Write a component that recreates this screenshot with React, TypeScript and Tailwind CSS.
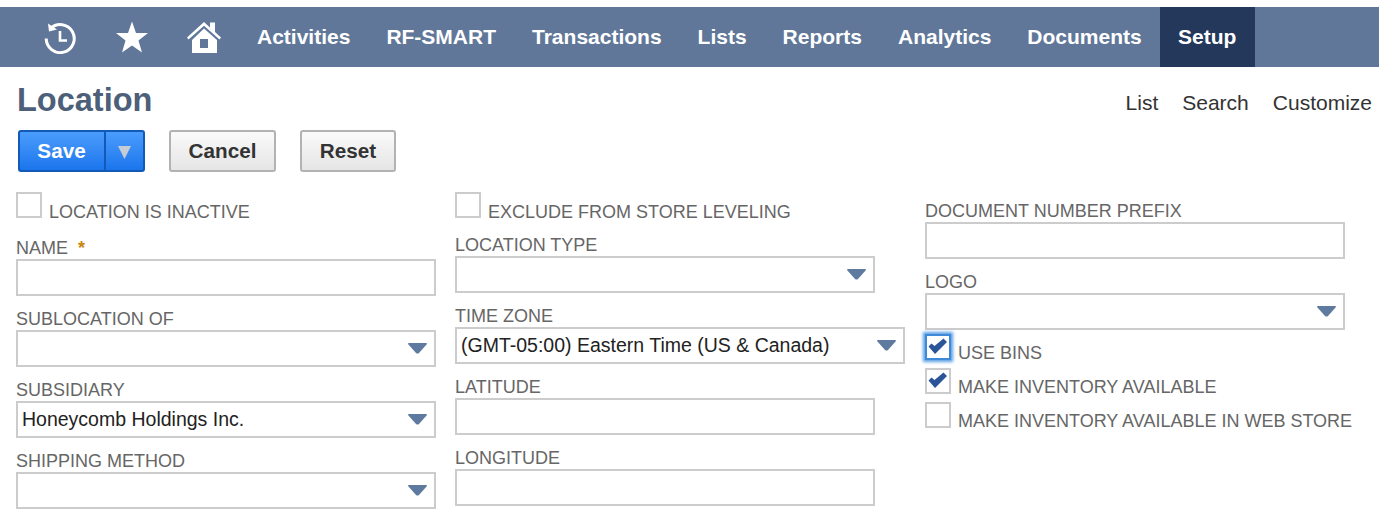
import type { ReactNode } from 'react';

const sans = 'font-["Liberation_Sans",Arial,sans-serif]';

const navItems = ['Activities', 'RF-SMART', 'Transactions', 'Lists', 'Reports', 'Analytics', 'Documents'];

function HistoryIcon() {
  return (
    <svg width="34" height="34" viewBox="0 0 34 34" fill="none" stroke="white" strokeWidth="3">
      <path d="M7.5 8.5 A14 14 0 1 1 3.2 18.5" />
      <path d="M5 3.5 L6 11.5 L14 9.5 Z" fill="white" stroke="none" />
      <path d="M17 11 V20.5 H24" strokeWidth="2.6" />
    </svg>
  );
}

function StarIcon() {
  return (
    <svg width="34" height="34" viewBox="0 0 34 34" fill="white">
      <path d="M17 1.5 L21 13 L33 13 L23.5 20.5 L27 32.5 L17 25.5 L7 32.5 L10.5 20.5 L1 13 L13 13 Z" />
    </svg>
  );
}

function HomeIcon() {
  return (
    <svg width="36" height="33" viewBox="0 0 36 33" fill="white">
      <path d="M1 16.5 L18 1 L24 6.500 V1.500 H29 V11 L35 16.5 L33.5 18.5 L18 4.8 L2.5 18.5 Z" />
      <path fillRule="evenodd" d="M18 7.5 L31 19 V32 H6 V19 Z M14 18 V27 H22 V18 Z" />
    </svg>
  );
}

function Caret() {
  return (
    <svg width="19" height="11" viewBox="0 0 19 11" className="absolute right-[7px] top-[11px]" fill="#5f7a9f">
      <path d="M0 1 Q0 0 1 0 H18 Q19 0 19 1 L11 10 Q9.500 11 8 10 Z" />
    </svg>
  );
}

function Check() {
  return (
    <svg width="20" height="18" viewBox="0 0 20 18" className="absolute left-[1px] top-[1px]" fill="#2a5699">
      <path d="M0.500 9.500 L3.500 6.500 L6.500 9 L15.500 1.500 L19 5 L7 17 Z" />
    </svg>
  );
}

function Label({ children }: { children: ReactNode }) {
  return <div className="h-[34px] pt-[12px] text-[18px] leading-[22px] whitespace-nowrap text-[#666666]">{children}</div>;
}

function TextField({ label }: { label: ReactNode }) {
  return (
    <div>
      <Label>{label}</Label>
      <div className="h-[37px] w-[420px] border-[2px] border-[#cccccc]" />
    </div>
  );
}

function SelectField({ label, value, wide }: { label: ReactNode; value?: string; wide?: boolean }) {
  return (
    <div>
      <Label>{label}</Label>
      <div className={`relative h-[37px] border-[2px] border-[#cccccc] pl-[4px] text-[19.500px] leading-[33px] text-[#222222] ${wide ? 'w-[450px]' : 'w-[420px]'}`}>
        {value}
        <Caret />
      </div>
    </div>
  );
}

function CheckField({ label, checked, focused, textTop = 'pt-[10px]' }: { label: string; checked?: boolean; focused?: boolean; textTop?: string }) {
  return (
    <div className="flex h-[34px] items-start gap-[7px]">
      <div
        className={`relative mt-[1px] h-[26px] w-[26px] shrink-0 border-[2px] ${focused ? 'border-[#3f8ad8] shadow-[0_0_3px_2px_#5b9fe6]' : 'border-[#cccccc]'}`}
      >
        {checked && <Check />}
      </div>
      <span className={`${textTop} text-[18px] leading-[22px] whitespace-nowrap text-[#666666]`}>{label}</span>
    </div>
  );
}

export default function App() {
  return (
    <div className={`h-[518px] w-[1379px] overflow-hidden bg-white pt-[7px] ${sans}`}>
      {/* Barra de navegación */}
      <nav className="flex h-[60px] items-center bg-[#607799] pl-[43px] text-[21px] font-bold text-white">
        <div className="flex items-center">
          <HistoryIcon />
          <div className="ml-[38px]"><StarIcon /></div>
          <div className="ml-[37px]"><HomeIcon /></div>
        </div>
        <div className="ml-[35px] flex h-full items-center gap-[36px]">
          {navItems.map(item => (
            <span key={item}>{item}</span>
          ))}
        </div>
        <div className="ml-[18px] flex h-full w-[95px] items-center justify-center bg-[#24385b]">Setup</div>
      </nav>

      {/* Título */}
      <div className="flex items-start justify-between pr-[7px] pl-[17px]">
        <h1 className="pt-[13px] text-[32.500px] leading-[40px] font-bold text-[#4d5f79]">Location</h1>
        <div className="flex gap-[24px] pt-[24px] text-[21px] leading-[24px] text-[#333333]">
          <span>List</span>
          <span>Search</span>
          <span>Customize</span>
        </div>
      </div>

      {/* Botones */}
      <div className="mt-[10px] flex pl-[18px] text-[20.700px] font-bold">
        <div className="flex h-[42px] w-[127px] rounded-[3px] border-[2px] border-[#125ab5] bg-gradient-to-b from-[#4a9cfc] to-[#1a75ec] text-white">
          <div className="flex w-[86px] items-center justify-center border-r-[2px] border-[#125ab5] pr-[1px]">Save</div>
          <div className="flex flex-1 items-center justify-center">
            <svg width="13" height="13" viewBox="0 0 13 13" className="mt-[3px]" fill="#c4ccd6">
              <path d="M0 0 H13 L6.500 13 Z" />
            </svg>
          </div>
        </div>
        <button className="ml-[24px] h-[42px] w-[107px] rounded-[3px] border-[2px] border-[#b2b2b2] bg-gradient-to-b from-[#fafafa] to-[#e5e5e5] text-[#333333]">Cancel</button>
        <button className="ml-[24px] h-[42px] w-[96px] rounded-[3px] border-[2px] border-[#b2b2b2] bg-gradient-to-b from-[#fafafa] to-[#e5e5e5] text-[#333333]">Reset</button>
      </div>

      {/* Formulario */}
      <div className="mt-[19px] flex pl-[16px]">
        <div className="w-[439px]">
          <CheckField label="LOCATION IS INACTIVE" />
          <TextField label={<>NAME <span className="ml-[5px] font-bold text-[#c8860a]">*</span></>} />
          <SelectField label="SUBLOCATION OF" />
          <SelectField label="SUBSIDIARY" value="Honeycomb Holdings Inc." />
          <SelectField label="SHIPPING METHOD" />
        </div>
        <div className="w-[470px]">
          <CheckField label="EXCLUDE FROM STORE LEVELING" />
          <div className="-mt-[3px]">
            <SelectField label="LOCATION TYPE" />
          </div>
          <SelectField label="TIME ZONE" value="(GMT-05:00) Eastern Time (US & Canada)" wide />
          <TextField label="LATITUDE" />
          <TextField label="LONGITUDE" />
        </div>
        <div className="-mt-[3px]">
          <TextField label="DOCUMENT NUMBER PREFIX" />
          <SelectField label="LOGO" />
          <div className="mt-[3px]">
            <CheckField label="USE BINS" checked focused textTop="pt-[9px]" />
            <CheckField label="MAKE INVENTORY AVAILABLE" checked textTop="pt-[9px]" />
            <CheckField label="MAKE INVENTORY AVAILABLE IN WEB STORE" textTop="pt-[9px]" />
          </div>
        </div>
      </div>
    </div>
  );
}
